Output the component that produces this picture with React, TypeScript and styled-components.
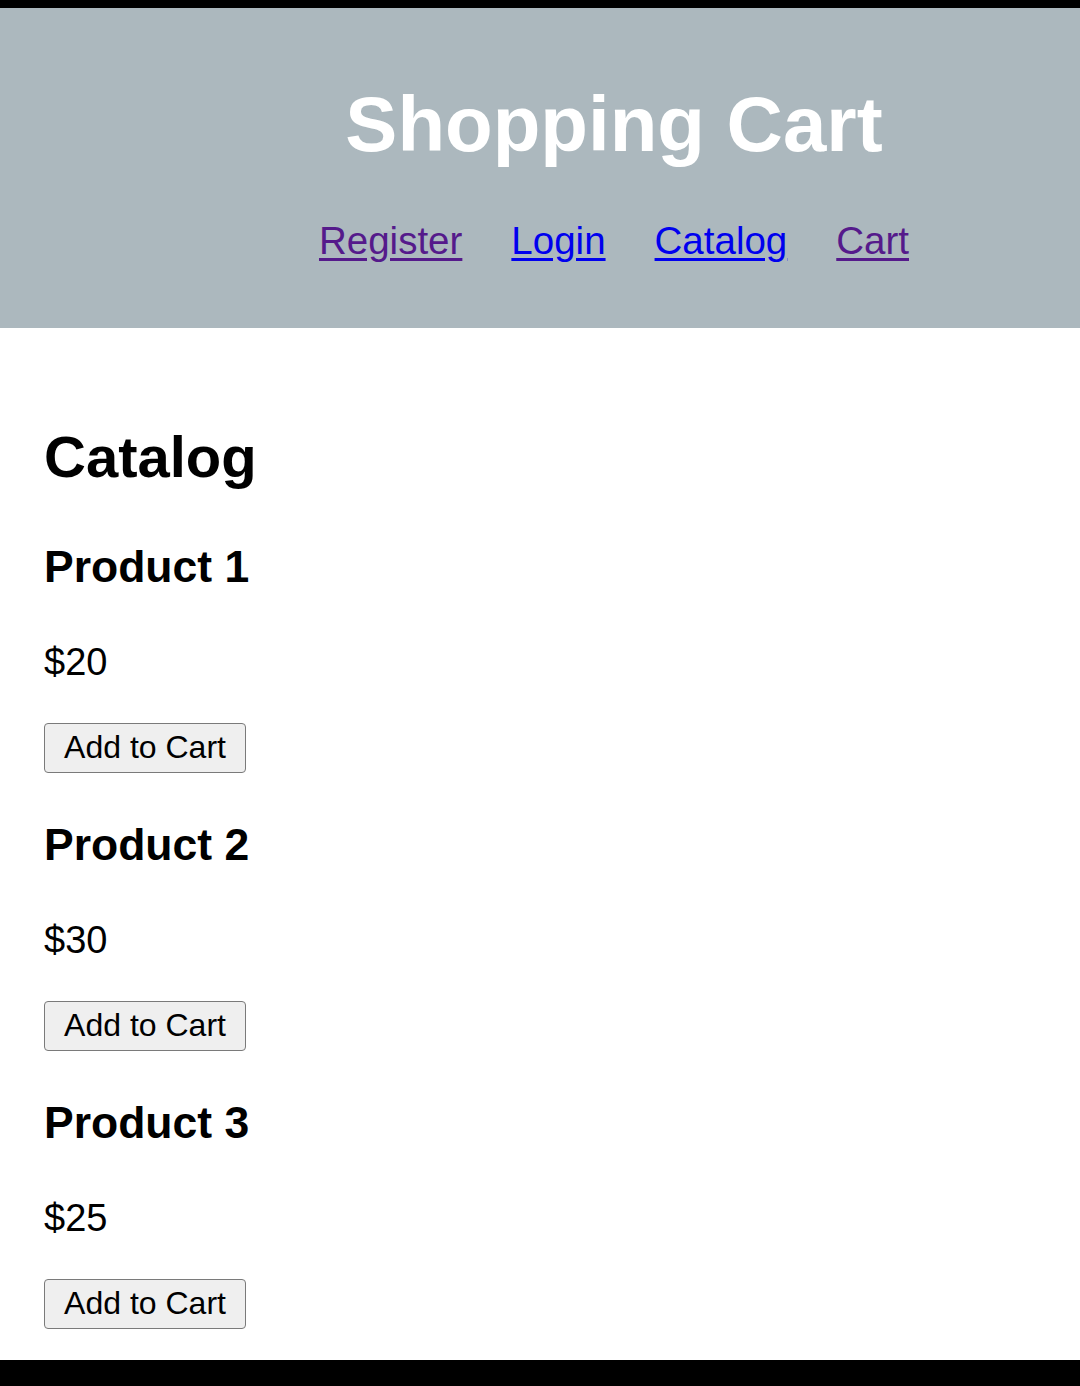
import React from "react";
import styled, { createGlobalStyle } from "styled-components";

const Global = createGlobalStyle`
  html, body { margin: 0; padding: 0; background: #000; }
  body { font-family: "Liberation Sans", Arial, sans-serif; }
`;

const Screen = styled.div`
  margin-top: 8px;
  height: 1352px;
  background: #ffffff;
  display: flex;
  flex-direction: column;
  overflow: hidden;
`;

const Header = styled.header`
  flex-shrink: 0;
  height: 320px;
  box-sizing: border-box;
  background: #acb8be;
  padding: 77px 0 0 148px;
  display: flex;
  flex-direction: column;
  align-items: center;
`;

const Title = styled.h1`
  margin: 0;
  font-size: 78px;
  line-height: 1;
  font-weight: 700;
  color: #ffffff;
`;

const Nav = styled.nav`
  margin-top: 59px;
  display: flex;
  gap: 49px;
`;

const NavLink = styled.a<{ $visited?: boolean }>`
  font-size: 38.5px;
  line-height: 1;
  color: ${(p) => (p.$visited ? "#551a8b" : "#0000ee")};
  text-decoration: underline;
  text-underline-offset: 4px;
`;

const Main = styled.main`
  flex-shrink: 0;
  padding: 100px 0 0 44px;
  display: flex;
  flex-direction: column;
  align-items: flex-start;
`;

const PageTitle = styled.h2`
  margin: 0 0 59px;
  font-size: 58px;
  line-height: 1;
  font-weight: 700;
  color: #000;
`;

const Product = styled.section`
  display: flex;
  flex-direction: column;
  align-items: flex-start;
  margin-bottom: 50.5px;
`;

const ProductName = styled.h3`
  margin: 0 0 53px;
  font-size: 44.5px;
  line-height: 1;
  font-weight: 700;
  color: #000;
`;

const Price = styled.p`
  margin: 0 0 42px;
  font-size: 38px;
  line-height: 1;
  color: #000;
`;

const AddButton = styled.button`
  height: 50px;
  width: 202px;
  box-sizing: border-box;
  margin: 0;
  padding: 0;
  font-family: "Liberation Sans", Arial, sans-serif;
  font-size: 32px;
  color: #000;
  background: #efefef;
  border: 1.5px solid #7a7a7a;
  border-radius: 4px;
`;

const products = [
  { name: "Product 1", price: "$20" },
  { name: "Product 2", price: "$30" },
  { name: "Product 3", price: "$25" },
];

export default function App() {
  return (
    <>
      <Global />
      <Screen>
        <Header>
          <Title>Shopping Cart</Title>
          <Nav>
            <NavLink href="#" $visited>Register</NavLink>
            <NavLink href="#">Login</NavLink>
            <NavLink href="#">Catalog</NavLink>
            <NavLink href="#" $visited>Cart</NavLink>
          </Nav>
        </Header>
        <Main>
          <PageTitle>Catalog</PageTitle>
          {products.map((p) => (
            <Product key={p.name}>
              <ProductName>{p.name}</ProductName>
              <Price>{p.price}</Price>
              <AddButton>Add to Cart</AddButton>
            </Product>
          ))}
        </Main>
      </Screen>
    </>
  );
}
